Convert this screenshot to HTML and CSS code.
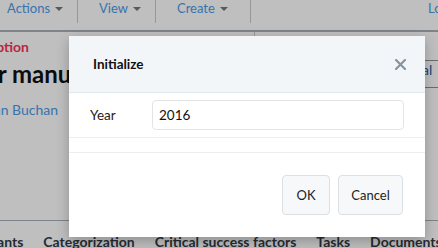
FILE: index.html
```html
<!DOCTYPE html>
<html lang="en">
<head>
  <meta charset="UTF-8" />
  <title>Initialize</title>
  <link rel="stylesheet" href="styles.css">
</head>
<body>
  <div class="page">
    <div class="topbar">
      <div class="menu-item">Actions <span class="caret"></span></div>
      <div class="menu-item">View <span class="caret"></span></div>
      <div class="menu-item">Create <span class="caret"></span></div>
      <div class="menu-spacer"></div>
      <div class="menu-item login">Log in</div>
    </div>
    <div class="content">
      <div class="main">
        <div class="label-red">Exception</div>
        <h1 class="doc-title">User manual</h1>
        <a class="author">Alan Buchan</a>
      </div>
      <div class="side">
        <div class="side-box">Final</div>
      </div>
    </div>
    <div class="tabs">
      <span class="tab first">Participants</span>
      <span class="tab">Categorization</span>
      <span class="tab">Critical success factors</span>
      <span class="tab">Tasks</span>
      <span class="tab">Documents</span>
    </div>
  </div>

  <div class="overlay"></div>

  <div class="modal">
    <div class="modal-header">
      <span class="modal-title">Initialize</span>
      <span class="close">
        <svg width="11" height="11" viewBox="0 0 11 11"><path d="M1 1L10 10M10 1L1 10" stroke="currentColor" stroke-width="2.2" stroke-linecap="square"/></svg>
      </span>
    </div>
    <div class="modal-body">
      <label class="field-label" for="year">Year</label>
      <input id="year" class="field-input" type="text" value="2016">
    </div>
    <div class="modal-footer">
      <button class="btn btn-ok">OK</button>
      <button class="btn btn-cancel">Cancel</button>
    </div>
  </div>
</body>
</html>
```

FILE: styles.css
```css
body {
  margin: 0;
  width: 438px;
  height: 248px;
  overflow: hidden;
  font-family: 'Lato', 'Open Sans', sans-serif;
  background-color: #ffffff;
  color: #333;
}

.page {
  height: 248px;
  display: flex;
  flex-direction: column;
}

.topbar {
  height: 32px;
  display: flex;
  align-items: flex-start;
  border-bottom: 2px solid #a9b0b6;
  box-sizing: border-box;
  flex-shrink: 0;
}

.menu-item {
  height: 23px;
  display: flex;
  align-items: flex-start;
  gap: 5px;
  padding: 0 22px 0 7px;
  line-height: 16px;
  font-size: 13px;
  color: #4a9be8;
  border-right: 1px solid #c8cacd;
  box-sizing: border-box;
}

.menu-item:nth-child(1) {
  width: 78px;
}

.menu-item:nth-child(2) {
  width: 78px;
  padding-left: 21px;
}

.menu-item:nth-child(3) {
  padding-left: 21px;
}

.caret {
  width: 0;
  height: 0;
  border-left: 4px solid transparent;
  border-right: 4px solid transparent;
  border-top: 4px solid #777;
  margin-top: 7px;
}

.menu-spacer {
  flex: 1;
  align-self: stretch;
}

.menu-item.login {
  border: none;
  padding: 0;
  margin-right: -24px;
}

.content {
  flex: 1;
  display: flex;
}

.main {
  flex: 1;
  padding-top: 6px;
}

.label-red {
  font-size: 14px;
  font-weight: bold;
  color: #fc3157;
  margin-left: -33px;
}

.doc-title {
  margin: 4px 0 0 -43px;
  font-size: 24px;
  font-weight: bold;
  color: #111;
}

.author {
  display: block;
  margin: 13px 0 0 -19px;
  font-size: 14px;
  color: #4a9be8;
}

.side {
  width: 183px;
  border-left: 1px solid #c8cacd;
  padding-top: 28px;
}

.side-box {
  margin-left: 169px;
  height: 26px;
  border-top: 1px solid #8a9096;
  border-bottom: 1px solid #8a9096;
  font-size: 14px;
  color: #1a5fa0;
  text-indent: -21px;
  line-height: 18px;
}

.tabs {
  height: 28px;
  border-top: 1px solid #a9b0b6;
  display: flex;
  gap: 20px;
  padding-top: 12px;
  white-space: nowrap;
  box-sizing: border-box;
  flex-shrink: 0;
}

.tab {
  font-size: 14px;
  font-weight: bold;
  color: #333a44;
}

.tab.first {
  margin-left: -51px;
}

.overlay {
  position: absolute;
  top: 0;
  left: 0;
  width: 438px;
  height: 248px;
  background-color: rgba(0, 0, 0, 0.25);
}

.modal {
  position: absolute;
  top: 36px;
  left: 69px;
  width: 356px;
  height: 201px;
  background-color: #ffffff;
  box-shadow: 0 4px 12px rgba(0, 0, 0, 0.25);
  display: flex;
  flex-direction: column;
}

.modal-header {
  height: 57px;
  box-sizing: border-box;
  background-color: #f3f6f9;
  border-bottom: 1px solid #e4e8eb;
  display: flex;
  align-items: center;
  justify-content: space-between;
  padding: 0 19px 0 24px;
}

.modal-title {
  font-size: 13.5px;
  font-weight: bold;
  color: #111;
}

.close {
  color: #8595a0;
  display: flex;
}

.modal-body {
  display: flex;
  align-items: center;
  padding: 7px 21px 7px 21px;
  border-bottom: 1px solid #eceef0;
}

.field-label {
  width: 62px;
  font-size: 13.5px;
  color: #222;
}

.field-input {
  flex: 1;
  height: 30px;
  box-sizing: border-box;
  border: 1px solid #e2e4e7;
  border-radius: 4px;
  padding: 0 6px;
  font-family: inherit;
  font-size: 13.5px;
  color: #111;
}

.modal-footer {
  margin-top: 14px;
  border-top: 1px solid #eceef0;
  display: flex;
  justify-content: flex-end;
  gap: 8px;
  padding: 22px 22px 0 0;
}

.btn {
  height: 40px;
  padding: 0;
  font-family: inherit;
  font-size: 13px;
  color: #222;
  background-color: #f7f8fa;
  border: 1px solid #dcdfe3;
  border-radius: 4px;
}

.btn-ok {
  width: 48px;
}

.btn-cancel {
  width: 65px;
}
```
